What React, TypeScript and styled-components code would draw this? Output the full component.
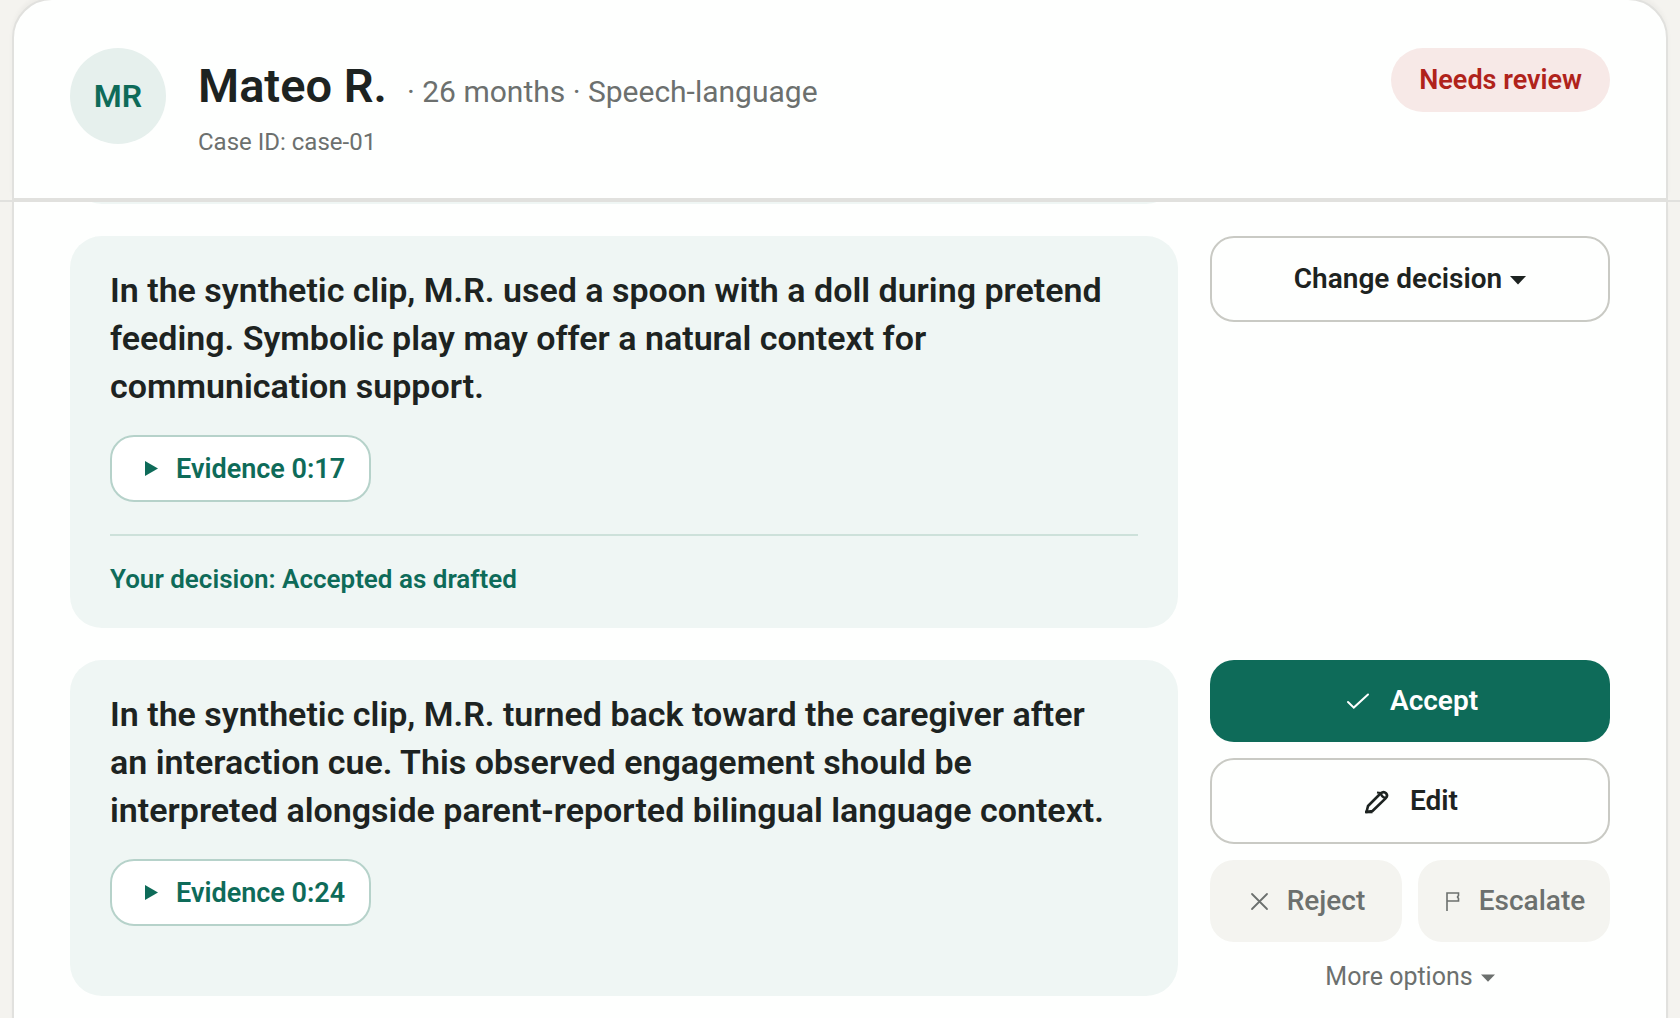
import React from "react";
import styled, { createGlobalStyle, css } from "styled-components";

const color = {
  page: "#f4f3ef",
  surface: "#fefffe",
  line: "#e1e1de",
  ink: "#1d2321",
  muted: "#6c706e",
  green: "#0e6b59",
  mint: "#eff6f4",
  avatar: "#e6f0ed",
  danger: "#b0231b",
  dangerSoft: "#f7e9e7",
  control: "#c9cac4",
  quiet: "#f4f4f0",
};

const GlobalStyle = createGlobalStyle`
  *, *::before, *::after { box-sizing: border-box; }
  body {
    margin: 0;
    background: ${color.page};
    color: ${color.ink};
    font-family: Roboto, "Liberation Sans", sans-serif;
  }
  h1, p { margin: 0; }
  button { font: inherit; color: inherit; cursor: pointer; }
`;

const Page = styled.div`
  min-height: 100vh;
  display: flex;
  flex-direction: column;
  overflow: hidden;
`;

const StickyHeader = styled.header`
  position: sticky;
  top: 0;
  z-index: 1;
  padding: 0 12px;
  background: ${color.page};
  border-bottom: 2px solid ${color.line};
`;

const CaseHeader = styled.div`
  display: flex;
  align-items: flex-start;
  gap: 32px;
  margin-top: -2px;
  padding: 48px 56px 40px;
  background: ${color.surface};
  border: 2px solid ${color.line};
  border-radius: 40px 40px 0 0;
  box-shadow: 0 -4px 4px rgba(29, 35, 33, 0.03);
`;

const Avatar = styled.div`
  flex: none;
  display: grid;
  place-items: center;
  width: 96px;
  height: 96px;
  border-radius: 50%;
  background: ${color.avatar};
  color: ${color.green};
  font-size: 32px;
  font-weight: 600;
`;

const Identity = styled.div`
  flex: 1;
  min-width: 0;
  display: flex;
  flex-direction: column;
  gap: 10px;
  padding-top: 8px;
`;

const NameRow = styled.div`
  display: flex;
  flex-wrap: wrap;
  align-items: baseline;
  column-gap: 20px;
`;

const Name = styled.h1`
  font-size: 47px;
  line-height: 60px;
  font-weight: 600;
`;

const Summary = styled.p`
  color: ${color.muted};
  font-size: 30px;
  line-height: 40px;
`;

const CaseId = styled.p`
  color: ${color.muted};
  font-size: 24px;
  line-height: 32px;
`;

const StatusPill = styled.span`
  flex: none;
  padding: 0 28px;
  border-radius: 32px;
  background: ${color.dangerSoft};
  color: ${color.danger};
  font-size: 27px;
  line-height: 64px;
  font-weight: 600;
`;

const CaseBody = styled.main`
  flex: 1;
  display: flex;
  flex-direction: column;
  gap: 32px;
  margin: 0 12px;
  padding: 0 56px;
  background: ${color.surface};
  border: solid ${color.line};
  border-width: 0 2px;
  box-shadow: 0 4px 4px rgba(29, 35, 33, 0.03);
`;

const Row = styled.section`
  display: grid;
  grid-template-columns: minmax(0, 1fr) 400px;
  gap: 32px;
`;

const Finding = styled.article`
  display: flex;
  flex-direction: column;
  align-items: flex-start;
  padding: 30px 40px;
  border-radius: 32px;
  background: ${color.mint};
`;

/* The tail of the finding that has scrolled under the sticky header. */
const ScrolledFinding = styled.div`
  height: 64px;
  margin-top: -62px;
  border-radius: 0 0 32px 32px;
  background: ${color.mint};
`;

const Statement = styled.p`
  padding-right: 16px;
  font-size: 34px;
  line-height: 48px;
  font-weight: 600;
`;

const EvidenceButton = styled.button`
  display: flex;
  align-items: center;
  gap: 8px;
  height: 67px;
  margin-top: 25px;
  padding: 0 24px;
  border: 2px solid #b6d2ca;
  border-radius: 24px;
  background: #ffffff;
  color: ${color.green};
  font-size: 27px;
  font-weight: 600;
`;

const Decision = styled.p`
  align-self: stretch;
  margin-top: 32px;
  padding-top: 24px;
  border-top: 2px solid #cde1da;
  color: ${color.green};
  font-size: 26px;
  line-height: 38px;
  font-weight: 600;
`;

const Actions = styled.div`
  display: flex;
  flex-direction: column;
  gap: 16px;
`;

const SplitActions = styled.div`
  display: grid;
  grid-template-columns: 1fr 1fr;
  gap: 16px;
`;

const tones = {
  primary: css`
    background: ${color.green};
    color: #ffffff;
    font-weight: 600;
  `,
  outline: css`
    background: ${color.surface};
    border: 2px solid ${color.control};
    font-weight: 600;
  `,
  quiet: css`
    background: ${color.quiet};
    color: ${color.muted};
    font-weight: 500;
  `,
};

const ActionButton = styled.button<{ $tone: keyof typeof tones; $gap?: number }>`
  display: flex;
  align-items: center;
  justify-content: center;
  gap: ${(p) => p.$gap ?? 16}px;
  padding: 22px 0;
  border: 0;
  border-radius: 24px;
  font-size: 28px;
  line-height: 38px;
  ${(p) => tones[p.$tone]}
`;

const MoreButton = styled.button`
  display: flex;
  align-items: center;
  justify-content: center;
  gap: 8px;
  padding: 0;
  border: 0;
  background: none;
  color: ${color.muted};
  font-size: 25px;
  line-height: 38px;
`;

const Svg = styled.svg`
  flex: none;
  display: block;
`;

const PlayIcon = () => (
  <Svg width="32" height="32" viewBox="0 0 32 32" aria-hidden="true">
    <path d="M9 8v15l13-7.5z" fill="currentColor" />
  </Svg>
);

const CaretIcon = ({ size = 16 }: { size?: number }) => (
  <Svg width={size} height={size} viewBox="0 0 16 16" aria-hidden="true">
    <path d="M0 5h16l-8 8.5z" fill="currentColor" />
  </Svg>
);

const CheckIcon = () => (
  <Svg width="32" height="32" viewBox="0 0 32 32" fill="none" stroke="currentColor" strokeWidth="2" aria-hidden="true">
    <path d="M6 17l5.8 5.6L26 9.5" strokeLinecap="round" />
  </Svg>
);

const PencilIcon = () => (
  <Svg width="32" height="32" viewBox="0 0 32 32" fill="none" stroke="currentColor" strokeWidth="2.6" aria-hidden="true">
    <path d="M4.500 27l1.500-6L18.500 8.500c2-1.700 4-1.800 5.500-.3 1.500 1.600 1.400 3.400-.4 5.200L10.500 26z" strokeLinejoin="round" />
    <path d="M15 7.500l4 .5M19 8.500c.4 2.600 2 4 4.500 4.500" strokeWidth="2.2" />
    <path d="M3 27h7.500" />
  </Svg>
);

const CrossIcon = () => (
  <Svg width="24" height="24" viewBox="0 0 24 24" fill="none" stroke="currentColor" strokeWidth="1.8" aria-hidden="true">
    <path d="M5 5l15 15M20 5L5 20" strokeLinecap="round" />
  </Svg>
);

const FlagIcon = () => (
  <Svg width="20" height="24" viewBox="0 0 20 24" fill="none" stroke="currentColor" strokeWidth="1.6" aria-hidden="true">
    <path d="M4 22V4h11.500v2.500l-1 1.500 1 1.500V12H4" />
  </Svg>
);

export default function App() {
  return (
    <>
      <GlobalStyle />
      <Page>
        <StickyHeader>
          <CaseHeader>
            <Avatar aria-hidden="true">MR</Avatar>
            <Identity>
              <NameRow>
                <Name>Mateo R.</Name>
                <Summary>· 26 months · Speech-language</Summary>
              </NameRow>
              <CaseId>Case ID: case-01</CaseId>
            </Identity>
            <StatusPill>Needs review</StatusPill>
          </CaseHeader>
        </StickyHeader>

        <CaseBody>
          <Row aria-hidden="true">
            <ScrolledFinding />
          </Row>

          <Row>
            <Finding>
              <Statement>
                In the synthetic clip, M.R. used a spoon with a doll during pretend feeding. Symbolic play may
                offer a natural context for communication support.
              </Statement>
              <EvidenceButton type="button">
                <PlayIcon />
                Evidence 0:17
              </EvidenceButton>
              <Decision>Your decision: Accepted as drafted</Decision>
            </Finding>
            <Actions>
              <ActionButton type="button" $tone="outline" $gap={8} aria-haspopup="menu">
                Change decision
                <CaretIcon />
              </ActionButton>
            </Actions>
          </Row>

          <Row>
            <Finding>
              <Statement>
                In the synthetic clip, M.R. turned back toward the caregiver after an interaction cue. This
                observed engagement should be interpreted alongside parent-reported bilingual language context.
              </Statement>
              <EvidenceButton type="button">
                <PlayIcon />
                Evidence 0:24
              </EvidenceButton>
            </Finding>
            <Actions>
              <ActionButton type="button" $tone="primary">
                <CheckIcon />
                Accept
              </ActionButton>
              <ActionButton type="button" $tone="outline">
                <PencilIcon />
                Edit
              </ActionButton>
              <SplitActions>
                <ActionButton type="button" $tone="quiet">
                  <CrossIcon />
                  Reject
                </ActionButton>
                <ActionButton type="button" $tone="quiet">
                  <FlagIcon />
                  Escalate
                </ActionButton>
              </SplitActions>
              <MoreButton type="button" aria-haspopup="menu">
                More options
                <CaretIcon size={14} />
              </MoreButton>
            </Actions>
          </Row>
        </CaseBody>
      </Page>
    </>
  );
}
